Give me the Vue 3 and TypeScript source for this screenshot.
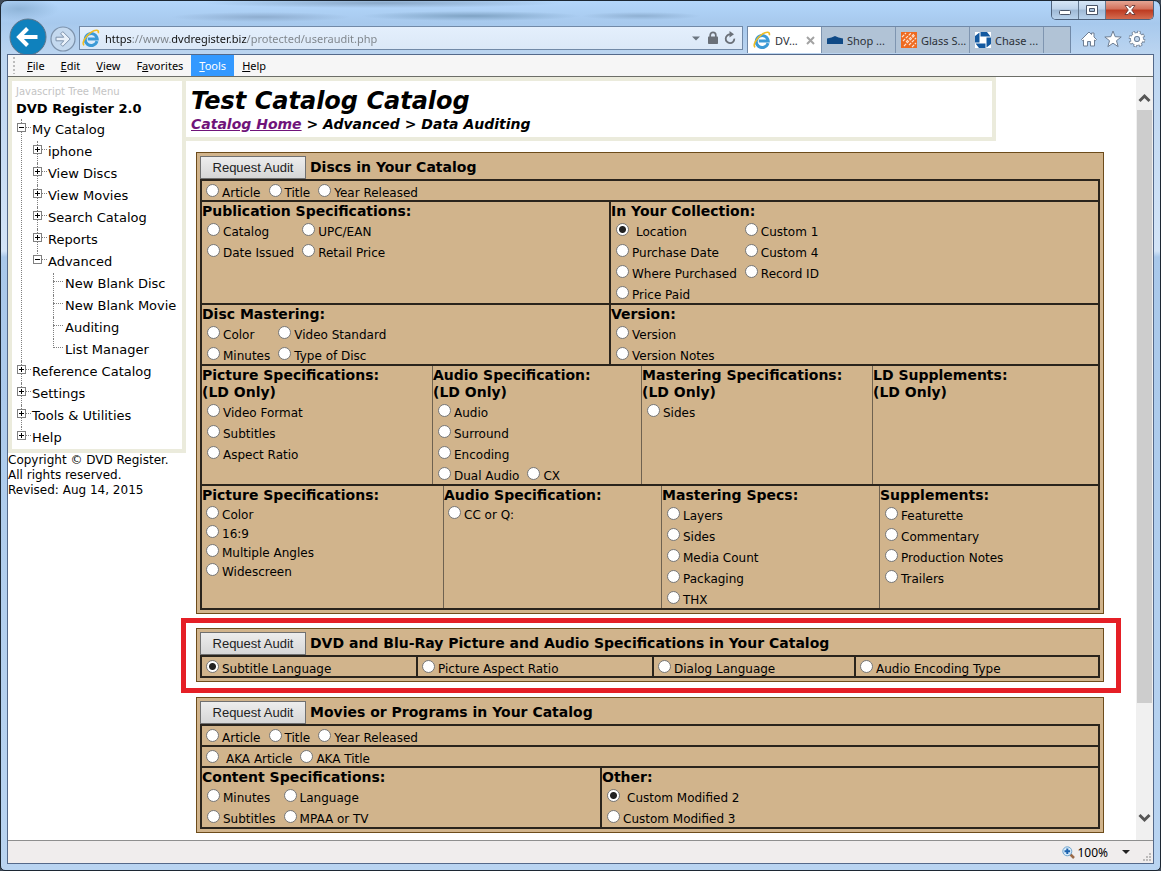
<script setup lang="ts">
import { reactive, ref } from 'vue'

interface Option {
  label: string
  wide?: boolean
}
interface Cell {
  heading?: string[]
  layout: 'inline' | 'table' | 'stack'
  /** Rows of options; each row holds columns. */
  rows: Option[][]
}
interface Row {
  columns: number[]
  thin?: boolean
  cells: Cell[]
}
interface Panel {
  id: string
  title: string
  marked?: boolean
  rows: Row[]
}
interface Node {
  label: string
  open?: boolean
  children?: Node[]
}

const o = (label: string, wide = false): Option => ({ label, wide })

const panels: Panel[] = [
  {
    id: 'discs',
    title: 'Discs in Your Catalog',
    rows: [
      { columns: [1], cells: [{ layout: 'inline', rows: [[o('Article'), o('Title'), o('Year Released')]] }] },
      {
        columns: [407, 489],
        cells: [
          {
            heading: ['Publication Specifications:'],
            layout: 'table',
            rows: [[o('Catalog'), o('UPC/EAN')], [o('Date Issued'), o('Retail Price')]],
          },
          {
            heading: ['In Your Collection:'],
            layout: 'table',
            rows: [
              [o('Location', true), o('Custom 1')],
              [o('Purchase Date'), o('Custom 4')],
              [o('Where Purchased'), o('Record ID')],
              [o('Price Paid')],
            ],
          },
        ],
      },
      {
        columns: [407, 489],
        cells: [
          {
            heading: ['Disc Mastering:'],
            layout: 'table',
            rows: [[o('Color'), o('Video Standard')], [o('Minutes'), o('Type of Disc')]],
          },
          { heading: ['Version:'], layout: 'table', rows: [[o('Version')], [o('Version Notes')]] },
        ],
      },
      {
        columns: [230, 209, 231, 226],
        thin: true,
        cells: [
          {
            heading: ['Picture Specifications:', '(LD Only)'],
            layout: 'table',
            rows: [[o('Video Format')], [o('Subtitles')], [o('Aspect Ratio')]],
          },
          {
            heading: ['Audio Specification:', '(LD Only)'],
            layout: 'table',
            rows: [[o('Audio')], [o('Surround')], [o('Encoding')], [o('Dual Audio'), o('CX')]],
          },
          { heading: ['Mastering Specifications:', '(LD Only)'], layout: 'table', rows: [[o('Sides')]] },
          { heading: ['LD Supplements:', '(LD Only)'], layout: 'table', rows: [] },
        ],
      },
      {
        columns: [241, 218, 218, 219],
        thin: true,
        cells: [
          {
            heading: ['Picture Specifications:'],
            layout: 'stack',
            rows: [[o('Color')], [o('16:9')], [o('Multiple Angles')], [o('Widescreen')]],
          },
          { heading: ['Audio Specification:'], layout: 'stack', rows: [[o('CC or Q:')]] },
          {
            heading: ['Mastering Specs:'],
            layout: 'table',
            rows: [[o('Layers')], [o('Sides')], [o('Media Count')], [o('Packaging')], [o('THX')]],
          },
          {
            heading: ['Supplements:'],
            layout: 'table',
            rows: [[o('Featurette')], [o('Commentary')], [o('Production Notes')], [o('Trailers')]],
          },
        ],
      },
    ],
  },
  {
    id: 'specs',
    title: 'DVD and Blu-Ray Picture and Audio Specifications in Your Catalog',
    marked: true,
    rows: [
      {
        columns: [214, 236, 202, 244],
        cells: [
          { layout: 'inline', rows: [[o('Subtitle Language')]] },
          { layout: 'inline', rows: [[o('Picture Aspect Ratio')]] },
          { layout: 'inline', rows: [[o('Dialog Language')]] },
          { layout: 'inline', rows: [[o('Audio Encoding Type')]] },
        ],
      },
    ],
  },
  {
    id: 'movies',
    title: 'Movies or Programs in Your Catalog',
    rows: [
      { columns: [1], cells: [{ layout: 'inline', rows: [[o('Article'), o('Title'), o('Year Released')]] }] },
      { columns: [1], cells: [{ layout: 'inline', rows: [[o('AKA Article', true), o('AKA Title')]] }] },
      {
        columns: [398, 498],
        cells: [
          {
            heading: ['Content Specifications:'],
            layout: 'table',
            rows: [[o('Minutes'), o('Language')], [o('Subtitles'), o('MPAA or TV')]],
          },
          {
            heading: ['Other:'],
            layout: 'table',
            rows: [[o('Custom Modified 2', true)], [o('Custom Modified 3')]],
          },
        ],
      },
    ],
  },
]

const picked = reactive<Record<string, string>>({
  discs: 'Location',
  specs: 'Subtitle Language',
  movies: 'Custom Modified 2',
})

const template = (columns: number[]) => columns.map((c) => `minmax(0, ${c}fr)`).join(' ')

const tree: Node[] = [
  {
    label: 'My Catalog',
    open: true,
    children: [
      { label: 'iphone' },
      { label: 'View Discs' },
      { label: 'View Movies' },
      { label: 'Search Catalog' },
      { label: 'Reports' },
      {
        label: 'Advanced',
        open: true,
        children: [
          { label: 'New Blank Disc' },
          { label: 'New Blank Movie' },
          { label: 'Auditing' },
          { label: 'List Manager' },
        ],
      },
    ],
  },
  { label: 'Reference Catalog' },
  { label: 'Settings' },
  { label: 'Tools & Utilities' },
  { label: 'Help' },
]

const menus = [
  { pre: '', key: 'F', post: 'ile' },
  { pre: '', key: 'E', post: 'dit' },
  { pre: '', key: 'V', post: 'iew' },
  { pre: 'F', key: 'a', post: 'vorites' },
  { pre: '', key: 'T', post: 'ools', active: true },
  { pre: '', key: 'H', post: 'elp' },
]

const address = ref('https://www.dvdregister.biz/protected/useraudit.php')
</script>

<template>
  <div class="window">
    <header class="titlebar">
      <div class="controls">
        <button type="button" class="ctl" aria-label="Minimize">
          <svg width="14" height="14" viewBox="0 0 14 14"><rect x="1.500" y="7.500" width="11" height="4" rx="1" fill="#fff" stroke="#4a5568" /></svg>
        </button>
        <button type="button" class="ctl" aria-label="Maximize">
          <svg width="14" height="14" viewBox="0 0 14 14"><path d="M1.500 2.500h11v9h-11z M4.500 5.500v3h5v-3z" fill="#fff" fill-rule="evenodd" stroke="#4a5568" /></svg>
        </button>
        <button type="button" class="ctl close" aria-label="Close">
          <svg width="14" height="14" viewBox="0 0 14 14"><path d="M2 2.500h3l2 2.300 2-2.300h3L8.700 7l3.300 4.500H9L7 9.200 5 11.500H2L5.300 7z" fill="#fff" stroke="#5a3030" stroke-width=".8" /></svg>
        </button>
      </div>
    </header>

    <nav class="navrow">
      <button type="button" class="round back" aria-label="Back">
        <svg width="38" height="38" viewBox="0 0 38 38">
          <circle cx="19" cy="19" r="18" fill="#0f81bd" stroke="#5f7488" />
          <path d="M28.500 19H11M18.500 10.500L10 19l8.500 8.500" fill="none" stroke="#fff" stroke-width="4" />
        </svg>
      </button>
      <button type="button" class="round forward" aria-label="Forward">
        <svg width="26" height="26" viewBox="0 0 26 26">
          <circle cx="13" cy="13" r="12" fill="#c4d9ef" stroke="#7d92ab" stroke-width="1.200" />
          <path d="M6 11.200h7.800l-3.200-3.400 2.200-2.200L20.200 13l-7.400 7.400-2.200-2.200 3.200-3.400H6z" fill="#e9f1fa" stroke="#7d92ab" />
        </svg>
      </button>
      <div class="address">
        <svg class="ie" width="18" height="18" viewBox="0 0 18 18">
          <path d="M15 12.200A6 6 0 1 1 15.200 9.900H5.800" fill="none" stroke="#3c9ad6" stroke-width="3" />
          <path d="M2.200 16.200C-1 14.600 3.500 7 9 3.300 13 .6 17.300.2 16.300 4.300" fill="none" stroke="#f1bd22" stroke-width="1.600" />
        </svg>
        <input v-model="address" type="text" aria-label="Address" spellcheck="false" />
        <svg width="8" height="5" viewBox="0 0 8 5"><path d="M0 .5h8L4 4.500z" fill="#6b7580" /></svg>
        <svg class="lock" width="12" height="14" viewBox="0 0 12 14">
          <path d="M3.200 6V4.200a2.800 2.800 0 0 1 5.600 0V6" fill="none" stroke="#6a7078" stroke-width="1.700" />
          <rect x="1" y="5.500" width="10" height="7.500" rx=".8" fill="#6a7078" />
        </svg>
        <svg width="12" height="14" viewBox="0 0 12 14">
          <path d="M10.300 7.600A4.300 4.300 0 1 1 6.500 3.500" fill="none" stroke="#6a7078" stroke-width="1.800" />
          <path d="M5.500 0v6.500L10 3.300z" fill="#6a7078" />
        </svg>
      </div>
      <div class="tabs">
        <div class="tab current">
          <svg width="18" height="18" viewBox="0 0 18 18">
            <path d="M15 12.200A6 6 0 1 1 15.200 9.900H5.800" fill="none" stroke="#3c9ad6" stroke-width="3" />
            <path d="M2.200 16.200C-1 14.600 3.500 7 9 3.300 13 .6 17.300.2 16.300 4.300" fill="none" stroke="#f1bd22" stroke-width="1.600" />
          </svg>
          <button type="button" class="name">DV...</button>
          <button type="button" class="x" aria-label="Close tab">
            <svg width="9" height="9" viewBox="0 0 9 9"><path d="M1 1l7 7M8 1L1 8" stroke="#a3a3a3" stroke-width="2" /></svg>
          </button>
        </div>
        <div class="tab">
          <svg width="16" height="16" viewBox="0 0 16 16"><path d="M0 12V6.500l4.500-1L8 4l3.500 1.500 4.500 1V12z" fill="#104a86" /></svg>
          <button type="button" class="name">Shop ...</button>
        </div>
        <div class="tab">
          <svg width="16" height="16" viewBox="0 0 16 16">
            <rect width="16" height="16" fill="#ee6a20" />
            <path d="M1 5l4-4M2 9l8-8M5 10l8-8M3 14L14 3M8 13l7-7M11 15l4-4" stroke="#fbe3d3" stroke-width="1.200" stroke-dasharray="3 1" />
          </svg>
          <button type="button" class="name">Glass S...</button>
        </div>
        <div class="tab">
          <svg width="16" height="16" viewBox="0 0 16 16">
            <rect width="16" height="16" fill="#fff" />
            <path d="M5.500 0H12l3.500 4.500H5.500zM16 5.500V12l-4.500 3.500V5.500zM10.500 16H4L.5 11.500h10zM0 10.500V4L4.500.5v10z" fill="#1359a0" />
          </svg>
          <button type="button" class="name">Chase ...</button>
        </div>
        <button type="button" class="newtab" aria-label="New tab"></button>
      </div>
      <div class="tools">
        <button type="button" aria-label="Home">
          <svg width="18" height="18" viewBox="0 0 18 18"><path d="M1.500 9.500L9 2l2.500 2.500V3h2.500v4l2.500 2.500-1.200 1.200-.8-.7V16h-4v-4.500h-3V16h-4v-6l-.8.700z" fill="#fff" stroke="#6f7f94" stroke-width="1" /></svg>
        </button>
        <button type="button" aria-label="Favorites">
          <svg width="18" height="18" viewBox="0 0 18 18"><path d="M9 1l2.200 5.700 6 .3-4.700 3.700 1.600 5.900L9 13.200l-5.100 3.400 1.600-5.900L.8 7l6-.3z" fill="#fff" stroke="#6f7f94" stroke-width="1" /></svg>
        </button>
        <button type="button" aria-label="Tools">
          <svg width="18" height="18" viewBox="0 0 18 18">
            <circle cx="9" cy="9" r="6.600" fill="none" stroke="#6f7f94" stroke-width="3.400" stroke-dasharray="3.200 1.984" />
            <circle cx="9" cy="9" r="5" fill="none" stroke="#6f7f94" stroke-width="3.600" />
            <circle cx="9" cy="9" r="6.600" fill="none" stroke="#fff" stroke-width="2.200" stroke-dasharray="1.800 3.384" stroke-dashoffset="-.7" />
            <circle cx="9" cy="9" r="4.600" fill="none" stroke="#fff" stroke-width="3" />
            <circle cx="9" cy="9" r="2.600" fill="#c4d9f0" stroke="#6f7f94" />
          </svg>
        </button>
      </div>
    </nav>

    <div class="client">
      <div class="menubar">
        <span class="grip"></span>
        <button v-for="m in menus" :key="m.post" type="button" :class="{ active: m.active }">
          {{ m.pre }}<u>{{ m.key }}</u>{{ m.post }}
        </button>
      </div>

      <div class="page">
        <aside class="side">
          <div class="treebox">
            <a class="credit" href="#">Javascript Tree Menu</a>
            <strong class="brand">DVD Register 2.0</strong>
            <ul class="tree">
              <li v-for="a in tree" :key="a.label">
                <div class="node">
                  <button type="button" class="knob" :class="{ open: a.open }" :aria-label="'Toggle ' + a.label"></button>
                  <a href="#">{{ a.label }}</a>
                </div>
                <ul v-if="a.children">
                  <li v-for="b in a.children" :key="b.label">
                    <div class="node">
                      <button type="button" class="knob" :class="{ open: b.open }" :aria-label="'Toggle ' + b.label"></button>
                      <a href="#">{{ b.label }}</a>
                    </div>
                    <ul v-if="b.children">
                      <li v-for="c in b.children" :key="c.label">
                        <div class="node leaf"><a href="#">{{ c.label }}</a></div>
                      </li>
                    </ul>
                  </li>
                </ul>
              </li>
            </ul>
          </div>
          <p class="legal">Copyright © DVD Register.<br />All rights reserved.<br />Revised: Aug 14, 2015</p>
        </aside>

        <main class="main">
          <div class="banner">
            <h1>Test Catalog Catalog</h1>
            <p><a href="#">Catalog Home</a> &gt; Advanced &gt; Data Auditing</p>
          </div>

          <div class="panels">
            <form v-for="p in panels" :key="p.id" class="panel" :class="{ marked: p.marked }" @submit.prevent>
              <div class="head">
                <button type="submit" class="request">Request Audit</button>
                <h2>{{ p.title }}</h2>
              </div>
              <div class="grid">
                <div
                  v-for="(r, ri) in p.rows"
                  :key="ri"
                  class="row"
                  :class="{ thin: r.thin }"
                  :style="{ gridTemplateColumns: template(r.columns) }"
                >
                  <div v-for="(c, ci) in r.cells" :key="ci" class="cell">
                    <h3 v-if="c.heading">
                      <span v-for="h in c.heading" :key="h">{{ h }}</span>
                    </h3>
                    <div class="options" :class="[c.layout, { pair: c.layout === 'table' && c.rows[0]?.length === 2 }]">
                      <div v-for="(line, li) in c.rows" :key="li" class="line">
                        <label v-for="opt in line" :key="opt.label" :class="{ wide: opt.wide }">
                          <input
                            v-model="picked[p.id]"
                            type="radio"
                            :name="p.id"
                            :value="(ri === 4 ? 'dvd ' : '') + opt.label"
                          />
                          <span>{{ opt.label }}</span>
                        </label>
                      </div>
                    </div>
                  </div>
                </div>
              </div>
            </form>
          </div>
        </main>

        <div class="scroll">
          <button type="button" aria-label="Scroll up">
            <svg width="13" height="10" viewBox="0 0 13 10"><path d="M1.500 8l5-5 5 5" fill="none" stroke="#565656" stroke-width="3" /></svg>
          </button>
          <div class="track"><div class="thumb"></div></div>
          <button type="button" aria-label="Scroll down">
            <svg width="13" height="10" viewBox="0 0 13 10"><path d="M1.500 2l5 5 5-5" fill="none" stroke="#565656" stroke-width="3" /></svg>
          </button>
        </div>
      </div>

      <footer class="status">
        <button type="button" class="zoom">
          <svg width="13" height="13" viewBox="0 0 13 13">
            <path d="M8 8l4 4" stroke="#9a6a4a" stroke-width="2.500" />
            <circle cx="5.300" cy="5.300" r="4.500" fill="#d8ecfb" stroke="#6fa3cc" />
            <path d="M5.300 2.500v5.600M2.500 5.300h5.600" stroke="#1c62ae" stroke-width="2" />
          </svg>
          100%
          <svg class="drop" width="8" height="4" viewBox="0 0 8 4"><path d="M0 0h8L4 4z" fill="#222" /></svg>
        </button>
        <svg class="resize" width="8" height="8" viewBox="0 0 8 8">
          <path d="M6 0h2v2H6zM3 3h2v2H3zM6 3h2v2H6zM0 6h2v2H0zM3 6h2v2H3zM6 6h2v2H6z" fill="#bcbaba" />
        </svg>
      </footer>
    </div>
  </div>
</template>

<style>
body {
  margin: 0;
  background: #3f4a58;
}
</style>

<style scoped>
* {
  box-sizing: border-box;
}
button {
  margin: 0;
  padding: 0;
  border: 0;
  background: none;
  font: inherit;
  color: inherit;
}
svg {
  display: block;
  flex: none;
}

.window {
  display: flex;
  flex-direction: column;
  min-height: 100vh;
  padding: 1px 6px 6px;
  border: 1px solid #1c2733;
  border-radius: 7px 7px 5px 5px;
  background:
    radial-gradient(ellipse 40px 12px at 18px 8px, #8fb4d8, transparent),
    radial-gradient(ellipse 180px 5px at 380px 2px, #8aa8c8, transparent),
    radial-gradient(ellipse 90px 5px at 260px 16px, #8eadcf, transparent),
    radial-gradient(ellipse 110px 5px at 470px 15px, #7fa3c4, transparent),
    radial-gradient(ellipse 60px 4px at 640px 15px, #8fb0d2, transparent),
    linear-gradient(to bottom, #b3d6fb 0, #a7c9ed 22px, #bcd5f0 54px, #d3e4f7 250px, #a9c8ea 256px, #b9d4f1 100%);
  font-family: 'Noto Sans', 'Open Sans', sans-serif;
  font-size: 11px;
  color: #000;
}

.titlebar {
  display: flex;
  justify-content: flex-end;
  height: 24px;
}
.controls {
  display: flex;
  height: 19px;
  margin-top: -1px;
  border: 1px solid #4d617b;
  border-top: 0;
  border-radius: 0 0 5px 5px;
  overflow: hidden;
}
.ctl {
  display: grid;
  place-items: center;
  width: 27px;
  border-right: 1px solid #64788f;
  background: linear-gradient(#d6e6f6, #bdd2e9 45%, #9fb9d5 50%, #b9d2ec);
}
.ctl.close {
  width: 47px;
  border-right: 0;
  background: linear-gradient(#e5a594, #d3705a 45%, #bd3a20 50%, #d46c50);
}

.navrow {
  display: flex;
  height: 28px;
}
.round {
  flex: none;
}
.back {
  align-self: flex-start;
  height: 38px;
  margin: -8px 0 0 2px;
}
.forward {
  align-self: flex-start;
  height: 26px;
  margin-left: 3px;
  margin-right: 3px;
}
.address {
  display: flex;
  flex: 1;
  align-items: center;
  gap: 5px;
  height: 24px;
  min-width: 0;
  padding: 0 6px 0 2px;
  border: 1px solid #7189a7;
  background: linear-gradient(#e4effc, #dbe8f7);
}
.address input {
  flex: 1;
  min-width: 0;
  height: 20px;
  padding: 0;
  border: 0;
  outline: 0;
  font: inherit;
  color: transparent;
  background: linear-gradient(to right, #111 0 27px, #7c8288 27px 66px, #111 66px 142px, #7c8288 142px);
  background-clip: text;
}
.lock {
  margin-left: 2px;
}
.tabs {
  display: flex;
  align-items: stretch;
  height: 27px;
  margin-left: 4px;
  border: 1px solid #7189a7;
  border-bottom: 0;
}
.tab {
  display: flex;
  align-items: center;
  gap: 4px;
  width: 74px;
  padding-left: 5px;
  border-right: 1px solid #7f95b0;
  background: #b1c3d6;
  color: #2b3138;
  white-space: nowrap;
}
.tab.current {
  background: #fff;
}
.x {
  margin-left: auto;
  margin-right: 6px;
}
.newtab {
  width: 26px;
  background: #b1c3d6;
}
.tools {
  display: flex;
  align-items: center;
  gap: 6px;
  height: 25px;
  margin: 0 8px 0 9px;
}

.client {
  position: relative;
  display: flex;
  flex: 1;
  flex-direction: column;
  border: 1px solid #54698a;
  background: #fff;
}
.menubar {
  display: flex;
  height: 22px;
  border-bottom: 1px solid #6c6e68;
  background: #f6f6f6;
}
.menubar button {
  padding: 0 8px;
}
.menubar button.active {
  background: #3399ff;
  color: #fff;
}
.grip {
  width: 2px;
  margin: 2px 4px 2px 5px;
  background: repeating-linear-gradient(#bdbdbd 0 2px, transparent 2px 4px);
}

.page {
  display: flex;
  flex: 1;
  font-family: Verdana, 'DejaVu Sans', sans-serif;
}
.side {
  width: 178px;
  flex: none;
}
.treebox {
  padding: 4px 0 0 4px;
  border: 4px solid #ebebdc;
}
.credit {
  display: block;
  font-size: 10px;
  line-height: 14px;
  color: #c4c4c4;
  text-decoration: none;
}
.brand {
  display: block;
  font-size: 13px;
  line-height: 20px;
}
.tree,
.tree ul {
  margin: 0;
  padding: 0;
  list-style: none;
}
.tree li {
  position: relative;
  padding-left: 16px;
}
.tree li::before {
  content: '';
  position: absolute;
  top: 0;
  bottom: 0;
  left: 5px;
  border-left: 1px dotted #808080;
}
.tree li:last-child::before {
  bottom: auto;
  height: 9px;
}
.node {
  position: relative;
  height: 22px;
  font-size: 13px;
  line-height: 21px;
  white-space: nowrap;
}
.node::before {
  content: '';
  position: absolute;
  top: 8px;
  left: -11px;
  width: 10px;
  border-top: 1px dotted #808080;
}
.node a {
  color: #000;
  text-decoration: none;
}
.leaf {
  padding-left: 1px;
}
.knob {
  position: absolute;
  top: 4px;
  left: -15px;
  width: 9px;
  height: 9px;
  border: 1px solid #808080;
  background:
    linear-gradient(#000, #000) center / 5px 1px no-repeat,
    linear-gradient(#000, #000) center / 1px 5px no-repeat,
    #fff;
}
.knob.open {
  background: linear-gradient(#000, #000) center / 5px 1px no-repeat, #fff;
}
.legal {
  margin: 0;
  font-size: 12px;
  line-height: 15px;
  white-space: nowrap;
}

.main {
  flex: 1;
  min-width: 0;
}
.banner {
  max-width: 810px;
  height: 64px;
  padding: 6px 5px 0;
  border: 4px solid #ebebdc;
  border-left: 0;
  font-style: italic;
  font-weight: bold;
}
h1 {
  margin: 0;
  font-size: 24px;
  line-height: 29px;
}
.banner p {
  margin: 0;
  font-size: 14px;
  line-height: 17px;
}
.banner a {
  color: #70147a;
}

.panels {
  padding: 11px 32px 7px 10px;
}
.panel {
  position: relative;
  margin-bottom: 14px;
  padding: 3px;
  border: 1px solid #6d4c1b;
  background: #d1b48c;
}
.panel:last-child {
  margin-bottom: 0;
}
.panel.marked {
  margin-bottom: 15px;
}
.panel.marked::after {
  content: '';
  position: absolute;
  inset: -11px -18px -12px -16px;
  border: 5px solid #e51f26;
  pointer-events: none;
}
.head {
  display: flex;
  gap: 4px;
  height: 23px;
}
.request {
  width: 106px;
  flex: none;
  border: 1px solid #707070;
  background: linear-gradient(#ededed, #d6d6d6);
  font-family: 'Liberation Sans', Arial, sans-serif;
  font-size: 13px;
  color: #222;
}
h2,
h3 {
  margin: 0;
  font-size: 14px;
}
h2 {
  line-height: 22px;
}
h3 {
  margin-bottom: -1px;
  padding-top: 1px;
  line-height: 17px;
}
h3 span {
  display: block;
  white-space: nowrap;
}
.grid {
  border: 2px solid #2a241c;
}
.row {
  display: grid;
}
.row + .row {
  border-top: 2px solid #2a241c;
}
.cell + .cell {
  border-left: 2px solid #2a241c;
}
.thin .cell + .cell {
  border-left: 1px solid #6f6250;
}
.options {
  padding-left: 5px;
}
.options.inline,
.options.stack {
  padding-left: 4px;
}
.line {
  display: flex;
  gap: 8px;
  height: 21px;
}
.inline .line,
.stack .line {
  height: 19px;
}
.pair {
  display: grid;
  grid-template-columns: max-content max-content;
  column-gap: 5px;
}
.pair .line {
  display: grid;
  grid-column: span 2;
  grid-template-columns: subgrid;
}
label {
  display: flex;
  gap: 3px;
  padding-top: 4px;
  line-height: 19px;
  white-space: nowrap;
}
.inline label,
.stack label {
  padding-top: 3px;
}
label.wide {
  gap: 7px;
}
label input {
  appearance: none;
  flex: none;
  width: 13px;
  height: 13px;
  margin: 0;
  border: 1px solid #767676;
  border-radius: 50%;
  background: #fff;
}
label input:checked {
  background: radial-gradient(circle at center, #222 0 3px, #fff 4px);
}
.options {
  font-size: 12px;
}

.scroll {
  display: flex;
  flex-direction: column;
  width: 17px;
  flex: none;
  padding-right: 1px;
  background: #f0f0f0;
}
.scroll button {
  display: grid;
  place-items: center;
  height: 33px;
  padding-top: 9px;
}
.scroll button:last-child {
  height: 40px;
  padding: 0 0 4px;
}
.track {
  flex: 1;
  padding-left: 1px;
}
.thumb {
  height: 86%;
  background: #cdcdcd;
}

.status {
  display: flex;
  align-items: center;
  justify-content: flex-end;
  height: 23px;
  border-top: 1px solid #8f8f8f;
  background: #f0eded;
}
.zoom {
  display: flex;
  align-items: center;
  gap: 2px;
  font-size: 12px;
}
.drop {
  margin-left: 12px;
}
.resize {
  align-self: flex-end;
  margin: 0 2px 2px 13px;
}
</style>
